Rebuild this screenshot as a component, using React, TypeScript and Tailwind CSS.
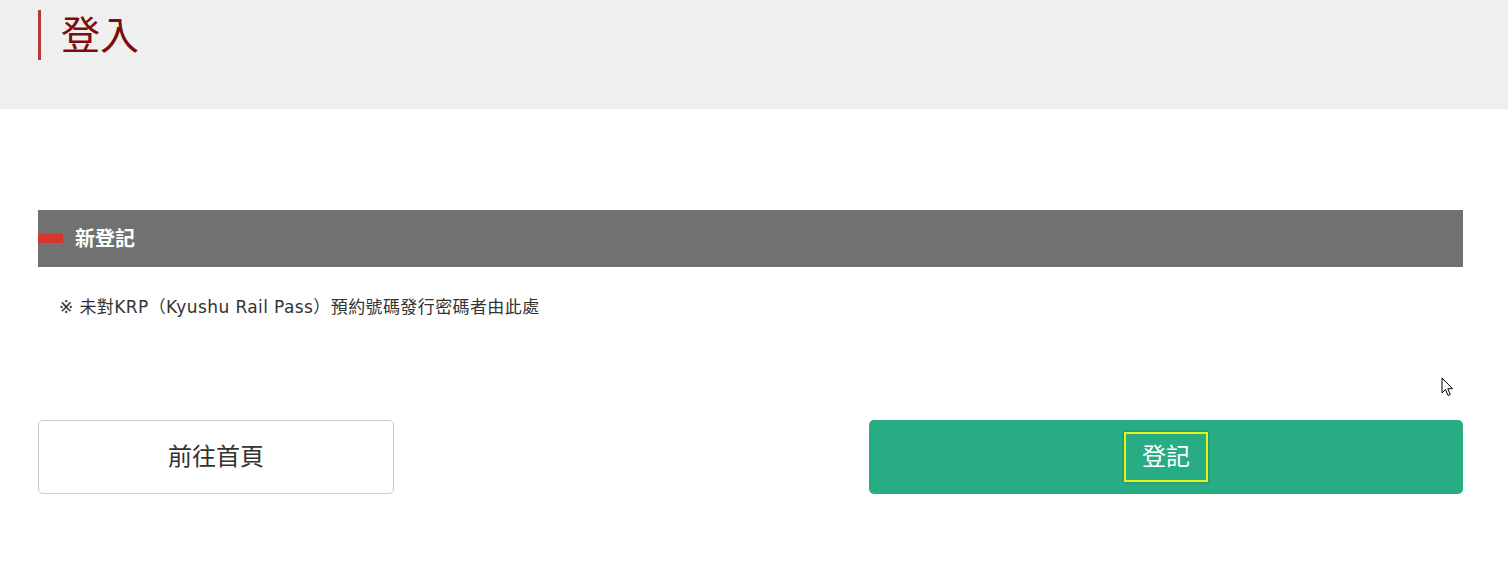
import React from 'react';

const FONT = '"DejaVu Sans", "Noto Sans CJK TC", sans-serif';

// 滑鼠游標（截圖中出現的）
const Cursor: React.FC = () => (
  <svg width="13" height="20" viewBox="0 0 13 20" className="absolute left-[1441px] top-[377px]">
    <path d="M1 1 L1 16 L4.5 12.5 L7 18.5 L9.3 17.5 L6.8 11.7 L11.5 11.7 Z" fill="#fff" stroke="#000" strokeWidth="1" strokeLinejoin="round" />
  </svg>
);

const App: React.FC = () => {
  return (
    <div className="relative w-[1508px] h-[581px] bg-white overflow-hidden" style={{ fontFamily: FONT }}>
      {/* 標題區 */}
      <div className="h-[109px] bg-[#efefef] pt-[10px] pl-[38px]">
        <div className="flex items-center h-[50px] border-l-[3px] border-[#b23a3a] pl-[20px]">
          <h1 className="text-[39px] leading-none text-[#7d0c0c]">登入</h1>
        </div>
      </div>

      <div className="px-[38px] pt-[101px]">
        <div className="w-[1425px]">
          {/* 區塊標題 */}
          <div className="flex items-center h-[57px] bg-[#717171]">
            <span className="w-[25px] h-[9px] bg-[#d8352f]" />
            <span className="ml-[12px] text-[20px] font-bold text-white">新登記</span>
          </div>

          <p className="mt-[27px] pl-[21px] text-[17px] tracking-[0.4px] leading-[26px] text-[#333]">
            ※ 未對KRP（Kyushu Rail Pass）預約號碼發行密碼者由此處
          </p>

          {/* 按鈕 */}
          <div className="flex justify-between mt-[100px]">
            <button className="w-[356px] h-[74px] bg-white border border-[#cccccc] rounded-[5px] text-[24px] text-[#333]">
              前往首頁
            </button>
            <button className="w-[594px] h-[74px] bg-[#27ac84] rounded-[5px] flex items-center justify-center">
              <span className="flex items-center justify-center w-[84px] h-[50px] border-2 border-[#e6f21c] text-[24px] text-white shadow-[0_0_3px_rgba(0,0,0,0.3)]">
                登記
              </span>
            </button>
          </div>
        </div>
      </div>

      <Cursor />
    </div>
  );
};

export default App;
